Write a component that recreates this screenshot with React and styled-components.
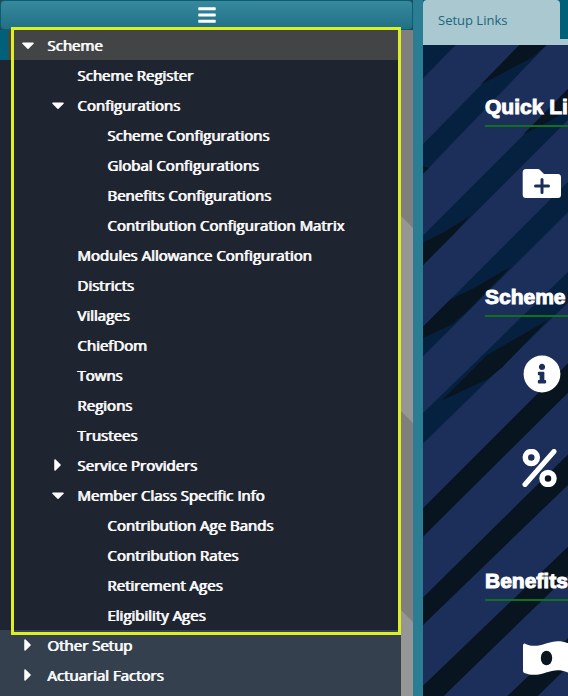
import React, { useState } from "react";
import styled, { createGlobalStyle } from "styled-components";
import { FaBars, FaCaretDown, FaCaretRight, FaInfoCircle } from "react-icons/fa";

const GlobalStyle = createGlobalStyle`
  *, *::before, *::after { box-sizing: border-box; }
  body {
    margin: 0;
    font-family: "Open Sans", "Noto Sans", sans-serif;
    background: #34404d;
  }
`;

const Page = styled.div`
  display: flex;
  min-height: 100vh;
  overflow: hidden;
`;

const Sidebar = styled.aside`
  flex: 0 0 413px;
  display: flex;
  flex-direction: column;
  background: #34404d;
`;

const MenuButton = styled.button`
  display: flex;
  align-items: center;
  justify-content: center;
  height: 30px;
  padding: 0;
  border: 1px solid #0d5d70;
  border-radius: 4px;
  background: linear-gradient(#37899d, #217086);
  color: #fff;
  font-size: 20px;
  cursor: pointer;
`;

const SidebarBody = styled.div`
  flex: 1;
  display: flex;
`;

const Tree = styled.nav`
  flex: 1;
  min-width: 0;
`;

const Highlighted = styled.div`
  position: relative;

  &::after {
    content: "";
    position: absolute;
    inset: -3px 0 -5px 11px;
    border: 3px solid #dff022;
    pointer-events: none;
  }
`;

const List = styled.ul`
  margin: 0;
  padding: 0;
  list-style: none;
  background: ${(p) => (p.$nested ? "#1f2530" : "transparent")};
`;

const rowStyles = `
  display: flex;
  align-items: center;
  gap: 9px;
  width: 100%;
  height: 30px;
  border: 0;
  color: #fff;
  font-family: inherit;
  font-size: 15px;
  font-weight: 400;
  line-height: 30px;
  text-shadow: 1px 0 #fff;
  white-space: nowrap;
  text-align: left;
  text-decoration: none;
  cursor: pointer;
`;

const BranchRow = styled.button`
  ${rowStyles}
  padding: 0 0 0 ${(p) => 18 + p.$level * 30}px;
  background: ${(p) => (p.$active ? "#434445" : "transparent")};
  box-shadow: ${(p) => (p.$active ? "inset 8px 0 #006079" : "none")};
`;

const LeafRow = styled.a`
  ${rowStyles}
  padding: 0 0 0 ${(p) => 47 + p.$level * 30}px;
`;

const Caret = styled.span`
  display: flex;
  justify-content: center;
  width: 20px;
  font-size: 20px;
`;

const ScrollTrack = styled.div`
  flex: 0 0 12px;
  overflow: hidden;
  background: #7f7f7f;

  svg {
    display: block;
  }
`;

const Divider = styled.div`
  flex: 0 0 10px;
  background: #2a7d92;
`;

const Main = styled.main`
  flex: 1;
  min-width: 0;
  display: flex;
  flex-direction: column;
`;

const TabBar = styled.div`
  display: flex;
  height: 45px;
  border-bottom: 6px solid #a9c8d0;
  background: #006079;
`;

const Tab = styled.button`
  flex: none;
  width: 137px;
  height: 45px;
  padding: 0 0 6px 15px;
  border: 0;
  border-radius: 4px 4px 0 0;
  background: #a9c8d0;
  color: #1c667c;
  font-family: inherit;
  font-size: 13px;
  text-align: left;
  cursor: pointer;
`;

const Content = styled.div`
  position: relative;
  isolation: isolate;
  flex: 1;
  display: flex;
  flex-direction: column;
  gap: 50px;
  padding: 46px 0 0 62px;
  overflow: hidden;
  background: #1c2f5b;
`;

const Backdrop = styled.svg`
  position: absolute;
  inset: 0;
  z-index: -1;
  width: 100%;
  height: 100%;
`;

const Section = styled.section`
  display: flex;
  flex-direction: column;
`;

const Heading = styled.h2`
  margin: 0 0 10px;
  padding-bottom: 3px;
  border-bottom: 2px solid #107020;
  color: #fff;
  font-family: "Liberation Sans", sans-serif;
  font-size: 21px;
  font-weight: 700;
  line-height: 31px;
  -webkit-text-stroke: 1px #fff;
  white-space: nowrap;
`;

const Shortcut = styled.a`
  display: flex;
  align-items: center;
  height: 94px;
  padding-left: 37px;
  color: #fff;
  font-size: 38px;

  svg {
    flex: none;
  }
`;

function FolderPlusIcon() {
  return (
    <svg width="40" height="38" viewBox="0 0 40 38" aria-hidden="true">
      <path
        d="M4 4H16Q17 4 18 5L22 9H36Q39 9 39 12.500V29.500Q39 33 36 33H4Q.7 33 .7 29.500V7.500Q.7 4 4 4Z"
        fill="currentColor"
      />
      <path d="M13.500 21H26.500M20 14.500V27.500" stroke="#1c2f5b" strokeWidth="3" strokeLinecap="round" />
    </svg>
  );
}

function InfoIcon() {
  return (
    <svg width="40" height="38" viewBox="0 0 40 38" aria-hidden="true">
      <FaInfoCircle x="1" size={38} />
    </svg>
  );
}

function PercentIcon() {
  return (
    <svg width="38" height="38" viewBox="0 0 38 38" fill="none" stroke="currentColor" aria-hidden="true">
      <circle cx="9.300" cy="8.500" r="6" strokeWidth="5.500" />
      <circle cx="26" cy="29.500" r="6" strokeWidth="5.500" />
      <path d="M3 35.500L32 2.500" strokeWidth="5" strokeLinecap="round" />
    </svg>
  );
}

function BanknoteIcon() {
  return (
    <svg width="48" height="38" viewBox="0 0 48 38" aria-hidden="true">
      <path
        fill="currentColor"
        d="M1 7C1 5 2 4 3.500 5C10 8 17 7 24 4.500C31 2 38 1 45.500 4C47 4.600 47 6 47 7V31C47 33 46 34 44.500 33C38 30 31 31 24 33.500C17 36 10 37 2.500 34C1 33.400 1 32 1 31Z"
      />
      <ellipse cx="24.500" cy="19" rx="5.700" ry="7.300" fill="#08141f" />
    </svg>
  );
}

const scheme = {
  label: "Scheme",
  active: true,
  open: true,
  children: [
    { label: "Scheme Register" },
    {
      label: "Configurations",
      open: true,
      children: [
        { label: "Scheme Configurations" },
        { label: "Global Configurations" },
        { label: "Benefits Configurations" },
        { label: "Contribution Configuration Matrix" },
      ],
    },
    { label: "Modules Allowance Configuration" },
    { label: "Districts" },
    { label: "Villages" },
    { label: "ChiefDom" },
    { label: "Towns" },
    { label: "Regions" },
    { label: "Trustees" },
    { label: "Service Providers", children: [] },
    {
      label: "Member Class Specific Info",
      open: true,
      children: [
        { label: "Contribution Age Bands" },
        { label: "Contribution Rates" },
        { label: "Retirement Ages" },
        { label: "Eligibility Ages" },
      ],
    },
  ],
};

const otherGroups = [
  { label: "Other Setup", children: [] },
  { label: "Actuarial Factors", children: [] },
];

const sections = [
  { title: "Quick Links", icons: [{ label: "New folder", Icon: FolderPlusIcon }] },
  {
    title: "Scheme",
    icons: [
      { label: "Information", Icon: InfoIcon },
      { label: "Rates", Icon: PercentIcon },
    ],
  },
  { title: "Benefits", icons: [{ label: "Payments", Icon: BanknoteIcon }] },
];

function TreeItem({ item, level }) {
  const [open, setOpen] = useState(Boolean(item.open));

  if (!item.children) {
    return (
      <li>
        <LeafRow href="#" $level={level}>
          {item.label}
        </LeafRow>
      </li>
    );
  }

  return (
    <li>
      <BranchRow
        type="button"
        $level={level}
        $active={item.active}
        aria-expanded={open}
        onClick={() => setOpen(!open)}
      >
        <Caret>{open ? <FaCaretDown /> : <FaCaretRight />}</Caret>
        {item.label}
      </BranchRow>
      {open && (
        <List $nested>
          {item.children.map((child) => (
            <TreeItem key={child.label} item={child} level={level + 1} />
          ))}
        </List>
      )}
    </li>
  );
}

function Stripes() {
  return (
    <Backdrop viewBox="0 0 145 651" preserveAspectRatio="xMinYMin slice" aria-hidden="true">
      <g fill="#06213f">
        <path d="M0 0H32L0 33Z" />
        <path d="M0 98L96 0H122L0 127Z" />
        <path d="M0 188L145 43V72L0 217Z" />
        <path d="M0 278L145 133V163L0 307Z" />
        <path d="M0 363L145 222V252L0 393Z" />
      </g>
      <g fill="#08141f">
        <path d="M57 39L95 0H122L108 12L82 26Z" />
        <path d="M0 120L6 121L0 127Z" />
        <path d="M99 88L112 75L145 41V63L125 75Z" />
        <path d="M0 195L22 184L46 169L29 188L0 217Z" />
        <path d="M0 278L27 251L50 240L86 219L43 263L28 276L0 289Z" />
        <path d="M18 351L63 306L122 272L78 318L63 330Z" />
        <path d="M0 457L145 312V341L0 485Z" />
        <path d="M0 545L145 402V432L0 572Z" />
        <path d="M0 632L145 493V521L0 662Z" />
        <path d="M74 651L145 583V611L104 651Z" />
      </g>
    </Backdrop>
  );
}

export default function App() {
  return (
    <>
      <GlobalStyle />
      <Page>
        <Sidebar>
          <MenuButton type="button" aria-label="Toggle menu">
            <FaBars />
          </MenuButton>
          <SidebarBody>
            <Tree aria-label="Setup">
              <Highlighted>
                <List>
                  <TreeItem item={scheme} level={0} />
                </List>
              </Highlighted>
              <List>
                {otherGroups.map((item) => (
                  <TreeItem key={item.label} item={item} level={0} />
                ))}
              </List>
            </Tree>
            <ScrollTrack>
              <svg width="12" height="666" viewBox="0 0 12 666" aria-hidden="true">
                <path d="M0 186L12 198V393L0 381ZM0 580L12 592V666H0Z" fill="#969696" />
              </svg>
            </ScrollTrack>
          </SidebarBody>
        </Sidebar>
        <Divider />
        <Main>
          <TabBar role="tablist">
            <Tab type="button" role="tab" aria-selected="true">
              Setup Links
            </Tab>
          </TabBar>
          <Content>
            <Stripes />
            {sections.map(({ title, icons }) => (
              <Section key={title}>
                <Heading>{title}</Heading>
                {icons.map(({ label, Icon }) => (
                  <Shortcut key={label} href="#" aria-label={label}>
                    <Icon />
                  </Shortcut>
                ))}
              </Section>
            ))}
          </Content>
        </Main>
      </Page>
    </>
  );
}
